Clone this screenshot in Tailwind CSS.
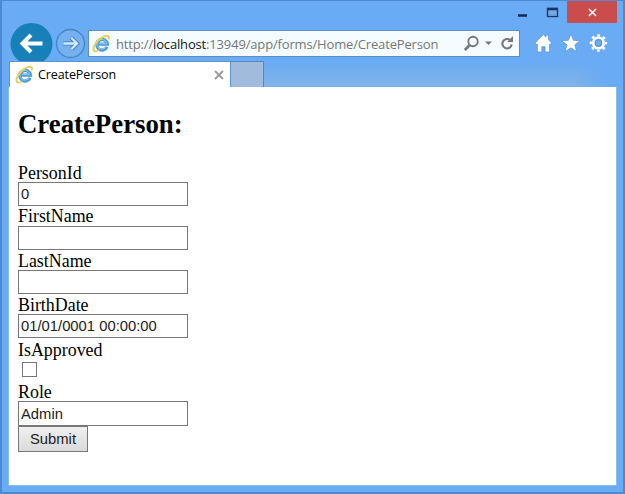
<!DOCTYPE html>
<html lang="en">
<head>
<meta charset="utf-8">
<title>CreatePerson</title>
<script src="https://cdn.jsdelivr.net/npm/@tailwindcss/browser@4"></script>
</head>
<body class="overflow-hidden">
<svg class="hidden">
  <symbol id="ie" viewBox="0 0 20 20">
    <path d="M15.800 13.500A5.600 5.600 0 1 1 16.200 10.600H6" fill="none" stroke="#4a98d6" stroke-width="3.400"/>
    <path d="M15 13A5.200 5.200 0 1 1 15.500 10.200H7" fill="none" stroke="#86c4ee" stroke-width="1.200"/>
    <path d="M2.600 18C-.5 15.500 4 8 9.500 4.300C14.500 .8 19 .8 17.600 5" fill="none" stroke="#e3d25a" stroke-width="2.100" stroke-linecap="round"/>
    <path d="M2.600 18C4 18.800 6 18 7.500 17" fill="none" stroke="#e9c66a" stroke-width="1.500"/>
  </symbol>
</svg>
<div class="flex h-[494px] w-[625px] flex-col border-2 border-t-1 border-[#4b8ad2] bg-[#69abf5]">
  <header class="flex h-[22px] shrink-0 justify-end pr-[6px]">
    <svg class="h-[22px] w-[54px]" viewBox="0 0 54 22">
      <path d="M5 14.500h9" stroke="#14295a" stroke-width="2.500"/>
      <rect x="34.500" y="7.500" width="10" height="8" fill="#72a9df" stroke="#183566" stroke-width="1.300"/>
      <path d="M34 8h11" stroke="#183566" stroke-width="2.500"/>
    </svg>
    <div class="flex h-[22px] w-[50px] items-center justify-center bg-[#cb4c4c]">
      <svg class="size-[9px]" viewBox="0 0 10 10"><path d="M1 1l8 8M9 1l-8 8" stroke="#fff" stroke-width="1.600"/></svg>
    </div>
  </header>
  <nav class="flex h-[38px] shrink-0 pl-[8px]">
    <svg class="mt-[-1px] h-[44px] w-[43px] shrink-0" viewBox="0 0 43 44">
      <circle cx="21.500" cy="22" r="21" fill="#1780b8"/>
      <path d="M32.500 21.500H12.500M21 13l-8.500 8.500 8.500 8.500" fill="none" stroke="#fff" stroke-width="4"/>
    </svg>
    <svg class="ml-[2px] mt-[5px] size-[31px] shrink-0" viewBox="0 0 31 31">
      <circle cx="15.500" cy="15.500" r="14" fill="#75b0ef" stroke="#4286c8" stroke-width="1.300"/>
      <path d="M8.500 15.500H22M16.500 10l5.500 5.500-5.500 5.500" fill="none" stroke="#3d7fc0" stroke-width="4.200"/>
      <path d="M8.500 15.500H22M16.500 10l5.500 5.500-5.500 5.500" fill="none" stroke="#d4eafd" stroke-width="2.300"/>
    </svg>
    <div class="ml-[2px] mt-[7px] flex h-[27px] w-[432px] shrink-0 items-center border border-[#5b8ec4] bg-[#f5fcff] pl-[3px]">
      <svg class="size-[19px] shrink-0"><use href="#ie"/></svg>
      <div class="ml-[5px] w-[346px] whitespace-nowrap font-['Open_Sans',sans-serif] text-[13px] leading-[24px] tracking-[-0.16px] text-[#777]">http://<span class="text-[#161616]">localhost</span>:13949/app/forms/Home/CreatePerson</div>
      <svg class="h-[25px] w-[56px] shrink-0" viewBox="0 0 56 25">
        <g fill="none" stroke="#777">
          <circle cx="11" cy="10.500" r="4.700" stroke-width="1.900"/>
          <path d="M7.800 14l-5 5" stroke-width="2.600"/>
          <path d="M48.500 9.500A4.700 4.700 0 1 0 49.700 13.500" stroke-width="2.100"/>
        </g>
        <path d="M23 10.500h7l-3.500 3.500zM45 11h6V5z" fill="#777"/>
      </svg>
    </div>
    <svg class="ml-[14px] mt-[10px] h-[21px] w-[79px] shrink-0" viewBox="0 0 76 20" preserveAspectRatio="none" fill="#fff" stroke="#4f8ac6" stroke-width=".6">
      <path d="M1 9.500L9 1.500l2.500 2.500V2h2.300v4.300L17 9.500 15.500 11l-.5-.5V18h-4.300v-5H7.500v5H3.200v-7.500L2.500 11z"/>
      <path d="M35.500 1l2.400 6 6.400.3-5 4 1.700 6.300-5.500-3.500-5.500 3.500 1.700-6.300-5-4 6.400-.3z"/>
      <g fill="none">
        <circle cx="62" cy="9.500" r="7.300" stroke="#fff" stroke-width="2.200" stroke-dasharray="2.600 3.133" stroke-dashoffset="1.300"/>
        <circle cx="62" cy="9.500" r="5" stroke="#fff" stroke-width="2.600"/>
        <circle cx="62" cy="9.500" r="3.200" stroke="#4f8ac6" stroke-width=".8"/>
      </g>
    </svg>
  </nav>
  <div class="relative z-10 flex h-[26px] shrink-0 pl-[7px]">
    <div class="flex w-[222px] items-center border border-b-0 border-[#5c94cc] bg-white pl-[5px]">
      <svg class="size-[19px] shrink-0"><use href="#ie"/></svg>
      <div class="ml-[4px] flex-1 whitespace-nowrap font-['Open_Sans',sans-serif] text-[12.5px] leading-[24px] tracking-[-0.1px] text-black">CreatePerson</div>
      <svg class="mr-[6px] size-[10px]" viewBox="0 0 10 10"><path d="M1 1l8 8M9 1L1 9" stroke="#9a9a9a" stroke-width="1.800"/></svg>
    </div>
    <div class="w-[33px] border border-b-0 border-l-0 border-[#5687be] bg-[#a1bbdd]"></div>
    <div class="flex flex-1 justify-end bg-linear-to-b from-[#69abf5] to-[#82b3e6]">
      <div class="w-[50px] bg-linear-to-r from-[#69abf5]/0 to-[#69abf5] to-70%"></div>
    </div>
  </div>
  <main class="ml-[7px] h-[398px] w-[607px] shrink-0 bg-white pl-[9px] pt-[20px] font-['Liberation_Serif',serif] text-[17.9px] text-black outline outline-1 outline-[#88bfe9]">
    <h1 class="mb-[21px] h-[34px] text-[26.8px] font-bold leading-[34px]">CreatePerson:</h1>
    <form class="flex flex-col items-start">
      <label class="h-[20px] leading-[22px]">PersonId</label>
      <input class="h-[24px] w-[170px] border border-[#777] px-[2px] font-['Liberation_Sans',sans-serif] text-[14.8px] text-[#222]" value="0">
      <label class="h-[20px] leading-[20px]">FirstName</label>
      <input class="h-[24px] w-[170px] border border-[#777] px-[2px]">
      <label class="h-[20px] leading-[22px]">LastName</label>
      <input class="h-[24px] w-[170px] border border-[#777] px-[2px]">
      <label class="h-[20px] leading-[22px]">BirthDate</label>
      <input class="h-[24px] w-[170px] border border-[#777] px-[2px] font-['Liberation_Sans',sans-serif] text-[14.8px] text-[#222]" value="01/01/0001 00:00:00">
      <label class="h-[24px] leading-[24px]">IsApproved</label>
      <input type="checkbox" class="ml-[4px] size-[15px] appearance-none border border-[#777] bg-white">
      <label class="mt-[4px] h-[20px] leading-[22px]">Role</label>
      <input class="h-[25px] w-[170px] border border-[#777] px-[2px] font-['Liberation_Sans',sans-serif] text-[14.8px] text-[#222]" value="Admin">
      <button type="button" class="h-[26px] w-[70px] border border-[#777] bg-linear-to-b from-[#f0f0f0] to-[#dadada] font-['Liberation_Sans',sans-serif] text-[14.8px] text-[#222]">Submit</button>
    </form>
  </main>
</div>
</body>
</html>
